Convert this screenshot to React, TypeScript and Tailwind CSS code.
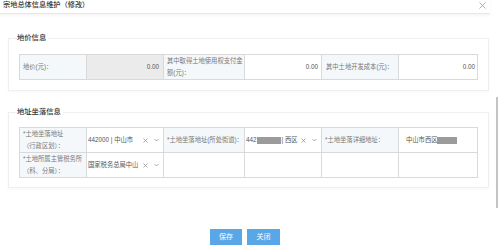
import React from "react";

const font = "font-['Liberation_Sans','Noto_Sans_CJK_SC',sans-serif]";

function Lbl({ children }: { children: React.ReactNode }) {
  return (
    <div className="bg-[#f4f8fb] border-r border-b border-[#d9d9d9] pl-[3px] flex items-center text-[#777] leading-[12px] whitespace-nowrap overflow-hidden">
      <div>{children}</div>
    </div>
  );
}

function Cell({ children, className = "" }: { children?: React.ReactNode; className?: string }) {
  return (
    <div className={`border-r border-b border-[#d9d9d9] flex items-center whitespace-nowrap overflow-hidden text-[#555] ${className}`}>
      {children}
    </div>
  );
}

function X() {
  return (
    <svg width="5" height="5" viewBox="0 0 5 5" className="shrink-0">
      <path d="M0.5 0.5 L4.5 4.5 M4.5 0.5 L0.5 4.5" stroke="#888" strokeWidth="0.7" />
    </svg>
  );
}

function Chev() {
  return (
    <svg width="5" height="4" viewBox="0 0 5 4" className="shrink-0">
      <path d="M0.5 1 L2.5 3 L4.5 1" stroke="#888" strokeWidth="0.7" fill="none" />
    </svg>
  );
}

function Redact({ w }: { w: number }) {
  return <span className="inline-block h-[7px] bg-[#9b9b9b] align-middle" style={{ width: w }} />;
}

function Select({ children }: { children: React.ReactNode }) {
  return (
    <Cell className="pl-[1px] pr-[4px]">
      <div className="flex-1 overflow-hidden flex items-center">{children}</div>
      <div className="flex items-center gap-[6px]">
        <X />
        <Chev />
      </div>
    </Cell>
  );
}

const cols = "grid grid-cols-[67px_77px_81px_77px_77px_79px] auto-rows-[25px] border-l border-t border-[#d9d9d9] text-[6.3px]";

export default function App() {
  return (
    <div className={`w-[498px] h-[246px] bg-white overflow-hidden flex ${font}`}>
      <div className="w-[494px] flex flex-col">
        {/* header */}
        <div className="w-[490px] h-[14px] border-b border-[#e6e6e6] shadow-[0_2px_3px_rgba(0,0,0,0.04)] flex items-start justify-between pl-[3px] pr-[4px]">
          <div className="text-[7.2px] leading-[10px] text-[#333] font-medium">宗地总体信息维护（修改）</div>
          <svg width="7" height="7" viewBox="0 0 7 7" className="mt-[2px]">
            <path d="M0.5 0.5 L6.5 6.5 M6.5 0.5 L0.5 6.5" stroke="#999" strokeWidth="0.8" />
          </svg>
        </div>

        {/* panel 1 */}
        <fieldset className="ml-[8px] w-[479px] mt-[19px] border border-[#efefef] shadow-[0_1px_3px_rgba(0,0,0,0.03)] px-[10px] pt-[11px] pb-[10px]">
          <legend className="-ml-[2px] pr-[2px] text-[7.3px] leading-[10px] text-[#333] font-medium">地价信息</legend>
          <div className={cols}>
            <Lbl>地价(元)：</Lbl>
            <Cell className="bg-[#ebebeb] justify-end pr-[4px]">0.00</Cell>
            <Lbl>
              其中取得土地使用权支付金
              <br />
              额(元)：
            </Lbl>
            <Cell className="justify-end pr-[3px]">0.00</Cell>
            <Lbl>
              <span className="pl-[1px]">其中土地开发成本(元)：</span>
            </Lbl>
            <Cell className="justify-end pr-[2px]">0.00</Cell>
          </div>
        </fieldset>

        {/* panel 2 */}
        <fieldset className="ml-[8px] w-[479px] mt-[16px] border border-[#efefef] shadow-[0_1px_3px_rgba(0,0,0,0.03)] px-[10px] pt-[10px] pb-[9px]">
          <legend className="-ml-[2px] pr-[2px] text-[7.3px] leading-[10px] text-[#333] font-medium">地址坐落信息</legend>
          <div className={cols}>
            <Lbl>
              *土地坐落地址
              <br />
              （行政区划）：
            </Lbl>
            <Select>442000 | 中山市</Select>
            <Lbl>*土地坐落地址(所处街道)：</Lbl>
            <Select>
              <span>442</span>
              <Redact w={24} />
              <span className="pl-[1px]">| 西区</span>
            </Select>
            <Lbl>*土地坐落详细地址：</Lbl>
            <Cell className="pl-[7px]">
              <span>中山市西区</span>
              <Redact w={20} />
            </Cell>

            <Lbl>
              *土地所属主管税务所
              <br />
              （科、分局）：
            </Lbl>
            <Select>国家税务总局中山</Select>
            <Cell />
            <Cell />
            <Cell />
            <Cell />
          </div>
        </fieldset>

        {/* footer buttons */}
        <div className="mt-[41px] flex justify-center gap-[5px] pr-[4px]">
          <button className="w-[32px] h-[16px] bg-[#5aa7e8] text-white text-[7px] leading-[16px]">保存</button>
          <button className="w-[33px] h-[16px] bg-[#5aa7e8] text-white text-[7px] leading-[16px]">关闭</button>
        </div>
      </div>

      {/* scrollbar */}
      <div className="w-[4px] flex justify-end">
        <div className="mt-[97px] w-[2px] h-[111px] bg-[#c4c4c4]" />
      </div>
    </div>
  );
}
